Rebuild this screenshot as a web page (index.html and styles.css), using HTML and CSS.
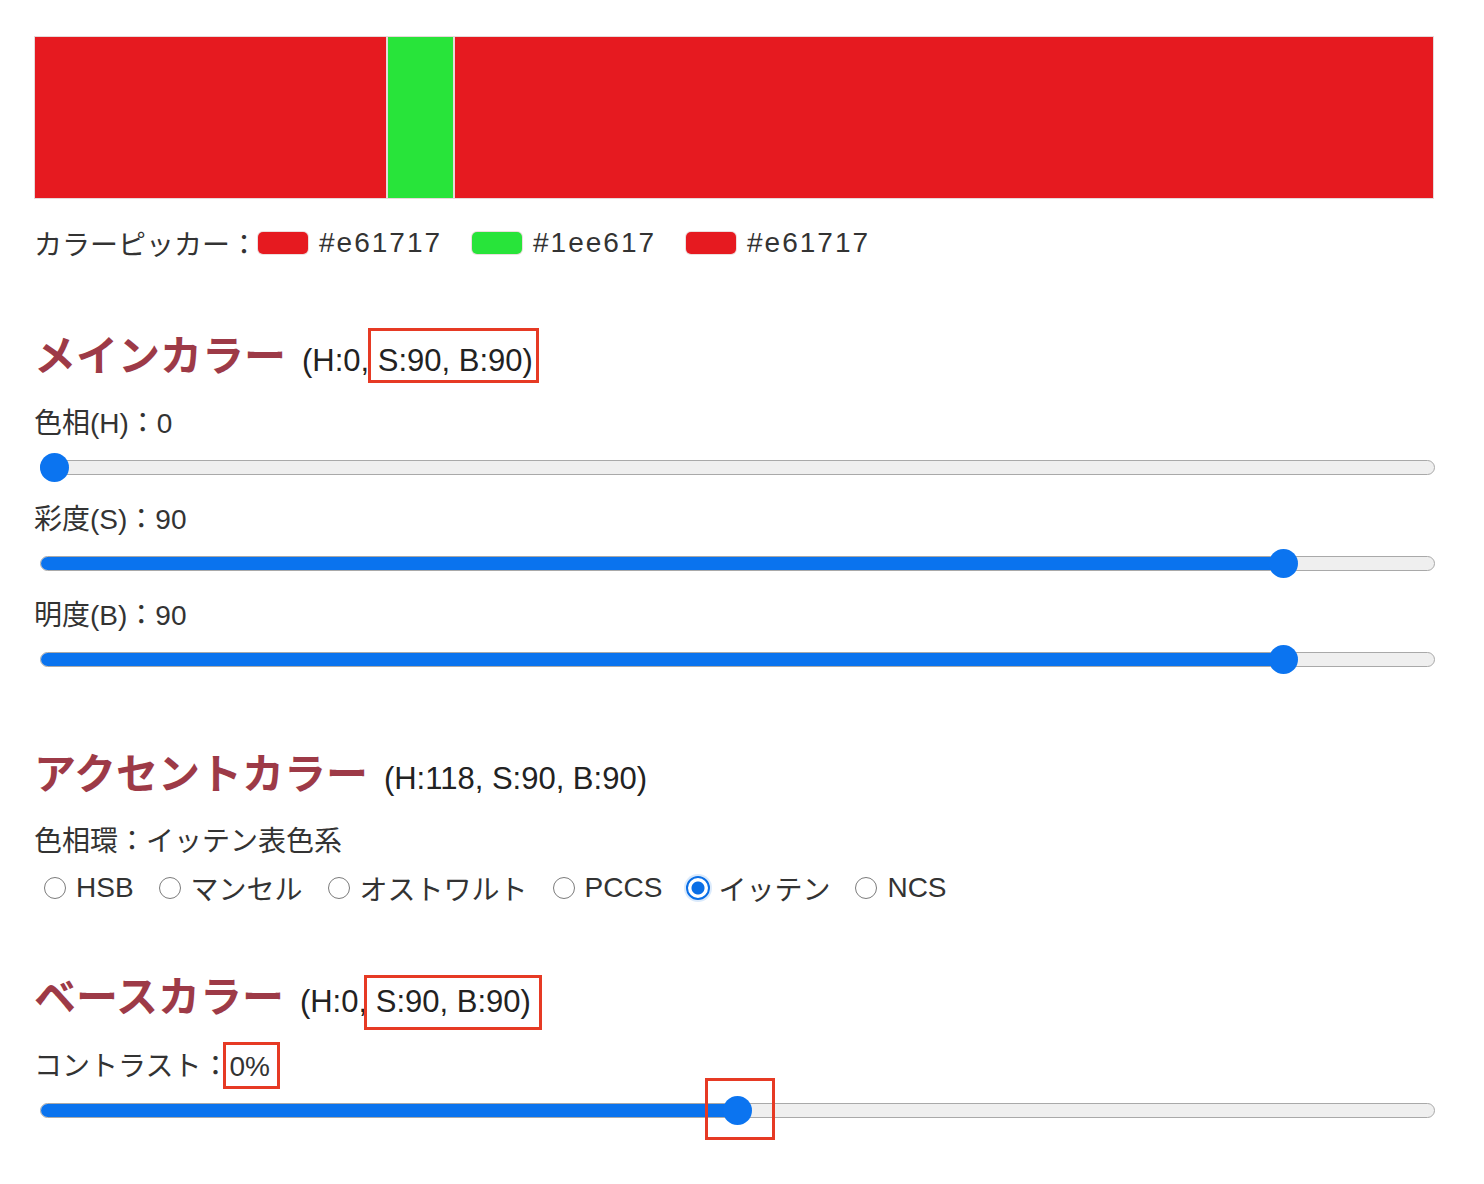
FILE: index.html
```html
<!DOCTYPE html>
<html lang="ja">
<head>
<meta charset="utf-8">
<title>カラーピッカー</title>
<link rel="stylesheet" href="styles.css">
</head>
<body>
<div class="page">
  <div class="bar">
    <div class="seg" style="width:25.2%;background:#e61a20"></div>
    <div class="seg" style="width:4.8%;background:#28e43a"></div>
    <div class="seg" style="width:70%;background:#e61a20"></div>
  </div>

  <div class="picker">
    <span class="picker-label">カラーピッカー：</span>
    <span class="swatch" style="background:#e61a20"></span><span class="hex">#e61717</span>
    <span class="swatch" style="background:#28e43a"></span><span class="hex">#1ee617</span>
    <span class="swatch" style="background:#e61a20"></span><span class="hex">#e61717</span>
  </div>

  <section class="section">
    <h2 class="title">メインカラー<span class="hsb">(H:0, <span class="mark mark-main">S:90, B:90)</span></span></h2>
    <div class="fields">
      <div class="field">
        <div class="label">色相(H)：0</div>
        <div class="slider" style="--v:0"><div class="track"><div class="fill"></div></div><div class="thumb"></div></div>
      </div>
      <div class="field">
        <div class="label">彩度(S)：90</div>
        <div class="slider" style="--v:0.9"><div class="track"><div class="fill"></div></div><div class="thumb"></div></div>
      </div>
      <div class="field">
        <div class="label">明度(B)：90</div>
        <div class="slider" style="--v:0.9"><div class="track"><div class="fill"></div></div><div class="thumb"></div></div>
      </div>
    </div>
  </section>

  <section class="section section-accent">
    <h2 class="title">アクセントカラー<span class="hsb">(H:118, S:90, B:90)</span></h2>
    <div class="label">色相環：イッテン表色系</div>
    <div class="radios">
      <label class="radio-item"><input type="radio" name="wheel">HSB</label>
      <label class="radio-item"><input type="radio" name="wheel">マンセル</label>
      <label class="radio-item"><input type="radio" name="wheel">オストワルト</label>
      <label class="radio-item"><input type="radio" name="wheel">PCCS</label>
      <label class="radio-item"><input type="radio" name="wheel" checked>イッテン</label>
      <label class="radio-item"><input type="radio" name="wheel">NCS</label>
    </div>
  </section>

  <section class="section section-base">
    <h2 class="title">ベースカラー<span class="hsb">(H:0, <span class="mark mark-base">S:90, B:90)</span></span></h2>
    <div class="field">
      <div class="label">コントラスト：<span class="mark mark-val">0%</span></div>
      <div class="slider" style="--v:0.5"><div class="track"><div class="fill"></div></div><div class="thumb mark-thumb"></div></div>
    </div>
  </section>
</div>
</body>
</html>
```

FILE: styles.css
```css
html, body {
  margin: 0;
  background: #ffffff;
}

body {
  color: #333333;
  font-family: "Liberation Sans", "Noto Sans CJK JP", sans-serif;
  font-size: 28px;
}

.page {
  width: 1400px;
  padding: 36px 0 40px 34px;
}

.bar {
  display: flex;
  height: 163px;
}

.seg {
  box-sizing: border-box;
  border: 1px solid #e6d9d9;
}

.picker {
  margin-top: 24px;
  height: 40px;
  display: flex;
  align-items: center;
  white-space: nowrap;
}

.swatch {
  display: inline-block;
  width: 50px;
  height: 22px;
  border-radius: 5px;
  box-shadow: 0 0 0 1px rgba(200, 160, 160, 0.35);
  margin-right: 11px;
}

.hex {
  letter-spacing: 2px;
  margin-right: 30px;
}

.section {
  margin-top: 60px;
}

.section-accent {
  margin-top: 59px;
}

.section-base {
  margin-top: 56px;
}

.title {
  margin: 0 0 21px;
  height: 60px;
  line-height: 60px;
  font-family: "Noto Sans CJK JP", sans-serif;
  font-size: 42px;
  font-weight: 700;
  color: #9d3a47;
  white-space: nowrap;
}

.section-base .title {
  margin-bottom: 23px;
}

.hsb {
  margin-left: 16px;
  font-family: "Liberation Sans", "Noto Sans CJK JP", sans-serif;
  font-size: 31px;
  font-weight: 400;
  color: #222222;
}

.fields {
  display: flex;
  flex-direction: column;
  gap: 10px;
}

.label {
  height: 40px;
  line-height: 40px;
  white-space: nowrap;
}

.slider {
  position: relative;
  height: 46px;
  display: flex;
  align-items: center;
  width: 1395px;
  margin-left: 6px;
}

.track {
  position: relative;
  box-sizing: border-box;
  width: 100%;
  height: 15px;
  border: 1.5px solid #a9a9a9;
  border-radius: 8px;
  background: #efefef;
  overflow: hidden;
}

.fill {
  position: absolute;
  left: -2px;
  top: -2px;
  bottom: -2px;
  width: calc(var(--v) * (100% - 26px) + 16px);
  background: #0a73ee;
  border-radius: 8px 0 0 8px;
}

.thumb {
  position: absolute;
  top: 50%;
  left: calc(var(--v) * (100% - 29px));
  width: 29px;
  height: 29px;
  margin-top: -14.5px;
  border-radius: 50%;
  background: #0b74f0;
}

.radios {
  margin-top: 6px;
  height: 40px;
  display: flex;
  align-items: center;
  white-space: nowrap;
}

.radio-item {
  display: flex;
  align-items: center;
  margin-right: 15px;
}

.radio-item input {
  -webkit-appearance: none;
  appearance: none;
  box-sizing: border-box;
  width: 22px;
  height: 22px;
  margin: 0 10px 0 10px;
  border: 1.5px solid #7b7b7b;
  border-radius: 50%;
  background: #ffffff;
}

.radio-item input:checked {
  width: 24px;
  height: 24px;
  margin: 0 8px 0 9px;
  border: 2px solid #0b6fe6;
  background: radial-gradient(circle, #0b6fe6 0 6px, #ffffff 7px);
  box-shadow: 0 0 0 2px rgba(11, 111, 230, 0.15);
}

.mark {
  position: relative;
}

.mark::after {
  content: "";
  position: absolute;
  border: 3px solid #e63a24;
  pointer-events: none;
}

.mark-main::after {
  top: -15px;
  bottom: -5px;
  left: -10px;
  right: -6px;
}

.mark-base::after {
  top: -9px;
  bottom: -11px;
  left: -12px;
  right: -11px;
}

.mark-val::after {
  top: -9px;
  bottom: -7px;
  left: -6px;
  right: -10px;
}

.mark-thumb::after {
  content: "";
  position: absolute;
  top: -18px;
  bottom: -15px;
  left: -18px;
  right: -23px;
  border: 3px solid #e63a24;
}
```
